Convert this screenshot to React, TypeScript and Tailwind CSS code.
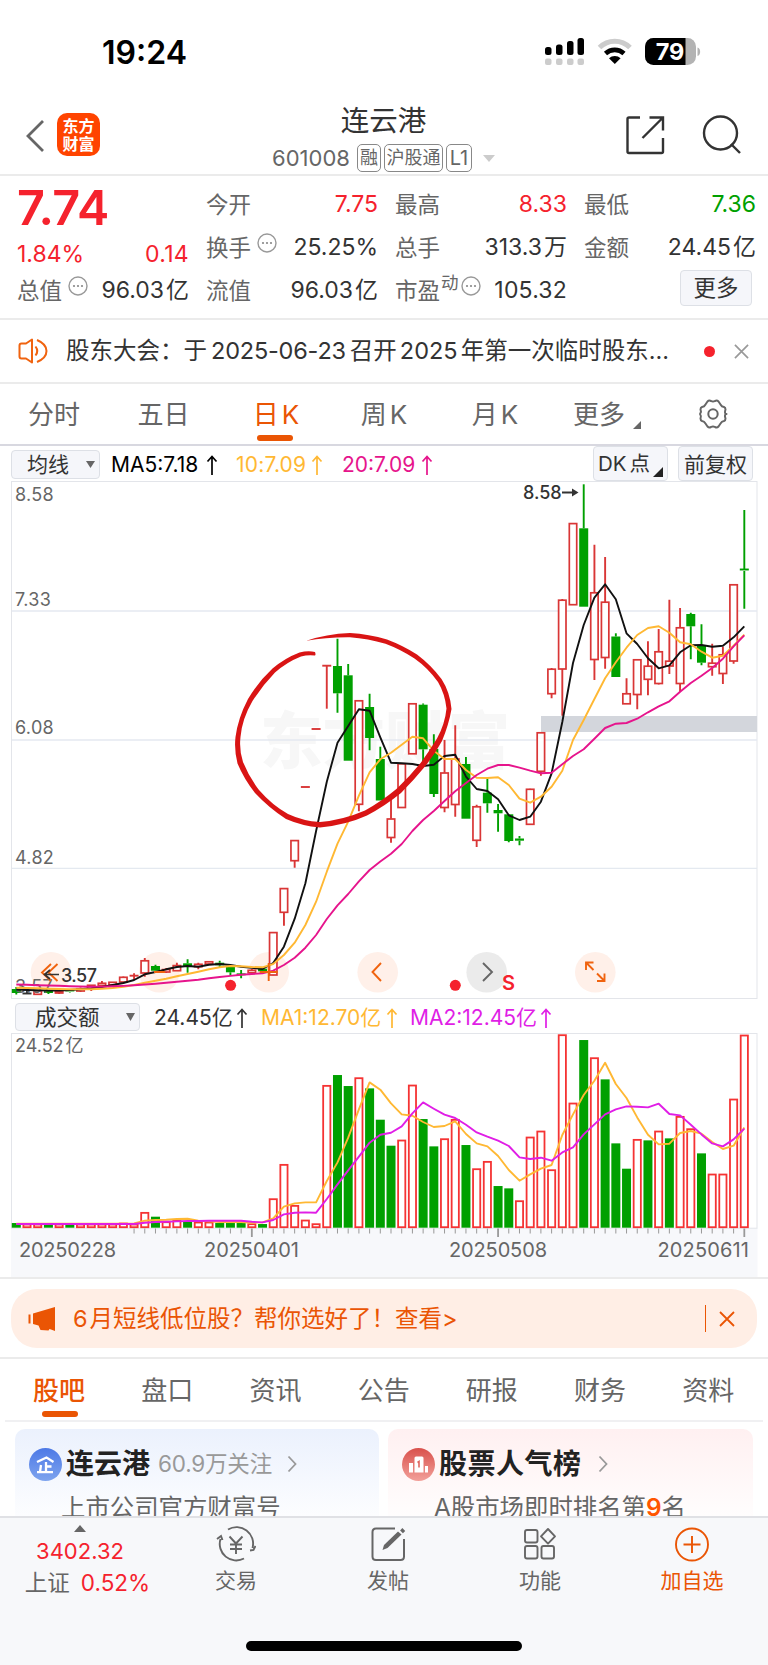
import React from 'react';

// [open side, top of body, bottom of body, wick top, wick bottom], y in chart units
type Candle = ['r' | 'g' | 'k', number, number, number, number];

const candles: Candle[] = [
  ['g', 989, 993, 987, 994.5],
  ['k', 993.5, 993.5, 989.5, 993.5],
  ['r', 990.5, 994.3, 990, 994.5],
  ['g', 991, 993, 990, 994],
  ['r', 991, 993, 990, 994],
  ['g', 990.5, 992, 990, 992.5],
  ['r', 988.5, 991, 987.5, 992],
  ['r', 985, 989, 985, 991],
  ['r', 983, 985.5, 981, 986.5],
  ['r', 982, 985, 982, 985],
  ['r', 977, 982, 976.5, 982.5],
  ['r', 975.7, 975.7, 973.3, 979],
  ['r', 960.5, 973, 958, 976.7],
  ['g', 966, 970.7, 964.7, 972],
  ['r', 969.3, 972, 968, 973],
  ['r', 965.3, 970.7, 962.7, 971],
  ['g', 963.3, 966, 959.3, 972.7],
  ['r', 964, 966.7, 962.7, 969.3],
  ['r', 961.5, 964, 961, 964.5],
  ['g', 962.7, 965.3, 960.7, 967.3],
  ['g', 967, 972.3, 967, 976],
  ['g', 974.3, 974.3, 970, 978.3],
  ['r', 970, 972.7, 969, 973],
  ['g', 968.7, 971.3, 968, 972],
  ['r', 932.3, 975, 932, 975.3],
  ['r', 888.3, 912.3, 888, 925.7],
  ['r', 840.3, 860.7, 840, 867.7],
  ['r', 787, 787, 787, 787],
  ['r', 729, 729, 729, 729],
  ['r', 665.7, 665.7, 665.7, 708.7],
  ['g', 666, 693.3, 638.7, 712.7],
  ['g', 675.3, 760.7, 664, 760.7],
  ['r', 700.5, 804.3, 700, 811.3],
  ['g', 707, 738, 693.7, 750.3],
  ['g', 759, 800.5, 746.7, 800.5],
  ['r', 818.7, 837.5, 796.7, 842.7],
  ['r', 763.5, 807.5, 763, 808],
  ['r', 703.5, 753.8, 703, 754],
  ['g', 704.7, 749.3, 703.5, 765],
  ['g', 749, 794, 734.3, 797],
  ['r', 772.7, 807.5, 740, 812.3],
  ['r', 758.7, 804.5, 725.3, 816.7],
  ['g', 764, 818.7, 757, 818.7],
  ['r', 806.5, 840.3, 804.7, 847],
  ['g', 792.7, 803.3, 778.7, 812.7],
  ['g', 810, 813.3, 804, 831.7],
  ['g', 814.3, 841, 814, 842.3],
  ['g', 838.5, 840.7, 836, 845.3],
  ['r', 789, 824.3, 788.7, 824.5],
  ['r', 732.5, 771.3, 732, 775.7],
  ['r', 668.9, 693.7, 668, 698.3],
  ['r', 599.9, 669, 599, 715.7],
  ['r', 523.3, 604.7, 523, 605],
  ['g', 528.3, 606.7, 484.3, 606.7],
  ['r', 592.5, 659.5, 544.7, 680],
  ['r', 601.9, 657.5, 557, 668.7],
  ['g', 636.5, 677, 633.3, 677],
  ['r', 693.5, 703.8, 678.3, 704],
  ['r', 659.5, 694.5, 659, 709.3],
  ['r', 665.9, 679.3, 641.3, 695.3],
  ['r', 651.5, 683.5, 629, 684.5],
  ['r', 660.9, 666, 599.7, 674],
  ['r', 627.5, 683.5, 608, 691.7],
  ['g', 614, 626.3, 612.7, 659.3],
  ['g', 645.7, 662.7, 624.3, 665.3],
  ['r', 662.9, 666.7, 643.7, 675.7],
  ['r', 654.5, 673.5, 646.7, 684],
  ['r', 584.5, 661, 584, 663.7],
  ['g', 569.5, 571, 510, 608.7],
];

const ma5 = [
  989.5, 990, 990.3, 990.5, 990.5, 990, 989.3, 988.3, 987, 985, 983, 980, 974.3, 972, 969.3, 967, 966, 966.7, 964.7, 964,
  965, 966.7, 967.7, 969, 963, 946.7, 918.7, 883.3, 831, 781.7, 742.7, 726, 709.3, 710.7, 737.3, 762.7, 763.3, 764,
  766, 764.7, 756, 754.7, 776.7, 789, 791, 799.3, 815.3, 820, 816.7, 801.7, 773.3, 722, 663, 625, 597.7, 584.3,
  599.3, 633.3, 644, 658.3, 668.3, 665.3, 652.3, 645.3, 645, 646.7, 645.7, 637.3, 626.3,
];

const ma10 = [
  987.7, 988, 988.3, 988.7, 989, 989.3, 989.3, 989.3, 988.7, 988, 986.7, 985, 982.7, 980.7, 978.7, 976.3, 974, 971.7, 969.3,
  967.3, 966, 966.3, 967, 967.3, 964, 955, 942.7, 925, 901.7, 871.7, 843.7, 821.7, 795.7, 772.3, 759.3, 752.7, 744.7,
  736.7, 738.3, 750.7, 759, 759, 770, 777.7, 778, 777.3, 785, 798.7, 802.7, 796.7, 786.7, 770.7, 740, 720, 699,
  678.3, 662.3, 647.7, 635, 628, 626.3, 632.7, 642.3, 644.3, 651.7, 657.7, 655.7, 645.7, 634.7,
];

const ma20 = [
  984.5, 984.8, 985.2, 985.5, 985.8, 986.2, 986.5, 986.7, 986.6, 986.3, 985.9, 985.3, 984.5, 983.7, 982.7, 981.7, 980.7, 979.7,
  978.3, 977, 975.9, 974.7, 974, 973.3, 970.7, 965, 957.7, 947.7, 935, 919, 905.3, 894, 881.3, 870, 861.5, 853.7,
  844, 831, 820, 811, 801, 791.3, 783, 775, 768.7, 765, 765, 767.7, 770.7, 773.3, 772.7, 764.3, 756, 749.3, 738.8,
  728, 723.7, 723, 718.7, 712.3, 706.3, 701.3, 691.7, 683, 675.7, 668, 658.7, 646.3, 635.3,
];

const volumes = [
  14, 11, 11, 11, 11, 11, 11, 11, 11, 11, 14, 11, 46, 33, 18, 22, 18, 17, 17, 14, 14, 14, 12, 11, 87, 190, 67, 23, 12,
  427, 458, 425, 450, 418, 324, 246, 263, 428, 326, 244, 267, 325, 248, 177, 199, 125, 118, 81, 272, 290, 174, 579,
  374, 563, 510, 445, 253, 177, 265, 262, 290, 268, 334, 297, 223, 161, 161, 386, 578,
];

const greenVolumes = [0, 3, 5, 13, 16, 19, 20, 21, 23, 30, 31, 33, 34, 35, 38, 39, 42, 45, 46, 53, 55, 56, 57, 59, 61, 64];

const volMa1 = [
  12, 12, 12, 12, 12, 12, 12, 12, 12, 12, 12, 13, 21, 23, 24, 26, 27, 21, 19, 17, 17, 17, 15, 16, 28, 63, 73, 76, 76,
  140, 196, 270, 355, 436, 414, 373, 340, 336, 317, 302, 305, 319, 281, 253, 244, 215, 173, 141, 160, 177, 188, 278,
  340, 398, 441, 495, 431, 389, 331, 279, 250, 252, 284, 290, 282, 257, 236, 246, 301,
];

const volMa2 = [
  11, 11, 11, 11, 11, 11, 11, 11, 11, 11, 11, 11, 15, 17, 18, 19, 20, 20, 21, 21, 21, 21, 18, 16, 23, 40, 45, 46, 45,
  86, 130, 172, 213, 255, 279, 285, 304, 343, 376, 357, 339, 329, 309, 286, 273, 261, 245, 211, 206, 210, 201, 226,
  241, 280, 310, 340, 355, 364, 363, 361, 372, 341, 337, 309, 280, 253, 244, 265, 297,
];

const colX = (i: number) => 16.3 + i * 10.706;
const line = (values: number[]) => values.map((v, i) => `${colX(i).toFixed(1)},${v}`).join(' ');
const volLine = (values: number[]) => values.map((v, i) => `${colX(i).toFixed(1)},${(1227.7 - v / 3).toFixed(1)}`).join(' ');

const candleColor = { r: '#d93636', g: '#00a000', k: '#333333' };

const periodTabs = [
  { label: '分时', width: 'w-[102px]' },
  { label: '五日', width: 'w-[117px]' },
  { label: '日', k: true, width: 'w-[108px]', active: true },
  { label: '周', k: true, width: 'w-[108px]' },
  { label: '月', k: true, width: 'w-[114px]' },
];

const infoTabs = ['股吧', '盘口', '资讯', '公告', '研报', '财务', '资料'];

function Dots() {
  return (
    <svg viewBox="0 0 20 20" className="w-5 h-5 shrink-0 -mt-[10px]">
      <circle cx="10" cy="10" r="9" fill="none" stroke="#999" strokeWidth="1.4" />
      <circle cx="6" cy="10" r="1.1" fill="#888" />
      <circle cx="10" cy="10" r="1.1" fill="#888" />
      <circle cx="14" cy="10" r="1.1" fill="#888" />
    </svg>
  );
}

function Yi({ value, unit = '亿' }: { value: string; unit?: string }) {
  return (
    <span className="flex items-center">
      {value}
      <span className="ml-[2px]">{unit}</span>
    </span>
  );
}

function Field({ label, icon, children, color = 'text-[#333]' }: {
  label: React.ReactNode;
  icon?: boolean;
  children?: React.ReactNode;
  color?: string;
}) {
  return (
    <div className="flex items-center h-[43px] text-[23px]">
      <span className="text-[22.5px] text-[#666]">{label}</span>
      {icon && <span className="ml-[6px] flex"><Dots /></span>}
      <span className={`ml-auto ${color}`}>{children}</span>
    </div>
  );
}

function UpArrow() {
  return (
    <svg viewBox="0 0 12 20" className="w-3 h-5" fill="none" stroke="currentColor" strokeWidth="1.7">
      <path d="M6 20V1.5M1.5 6.5L6 1.5l4.5 5" />
    </svg>
  );
}

function Cross({ className }: { className: string }) {
  return (
    <svg viewBox="0 0 16 16" className={className} fill="none" stroke="currentColor" strokeWidth="1.8">
      <path d="M1 1l14 14M15 1L1 15" />
    </svg>
  );
}

function StatusBar() {
  return (
    <div className="h-[88px] flex items-start">
      <div className="ml-[102px] mt-[33px] text-[32px] leading-[40px] font-semibold text-black">19:24</div>
      <svg viewBox="540 34 165 36" className="w-[165px] h-9 ml-auto mr-[63px] mt-[34px]">
        <rect x="545" y="47" width="6.5" height="8" rx="2.5" />
        <rect x="556" y="44.5" width="6.5" height="10.5" rx="2.5" />
        <rect x="567" y="41" width="6.5" height="14" rx="2.5" />
        <rect x="577.5" y="38" width="6.5" height="17" rx="2.5" />
        {[545, 556, 567, 577.5].map((x) => (
          <rect key={x} x={x} y="58.5" width="6.5" height="6.5" rx="2" fill="#ccc" />
        ))}
        <path d="M599.5 47.5A21.5 21.5 0 0 1 630 47.5" fill="none" stroke="#ccc" strokeWidth="5" />
        <path d="M605.5 53.5A13.5 13.5 0 0 1 624 53.5" fill="none" stroke="#000" strokeWidth="4.6" />
        <path d="M614.8 64l-5.8-5.8a8.4 8.4 0 0 1 11.6 0z" />
        <clipPath id="battery"><rect x="645" y="38" width="51" height="27" rx="8.5" /></clipPath>
        <g clipPath="url(#battery)">
          <rect x="645" y="38" width="51" height="27" fill="#b3b3b3" />
          <rect x="645" y="38" width="40.5" height="27" />
        </g>
        <path d="M697.5 47.5c3.5 1 3.5 7.5 0 8.5z" fill="#b3b3b3" />
        <text x="670" y="60" textAnchor="middle" fontSize="23.5" fontWeight="700" fill="#fff">79</text>
      </svg>
    </div>
  );
}

function Header() {
  return (
    <div className="h-[88px] flex border-b-2 border-[#ebebeb]">
      <div className="flex-1 flex pl-[25px] pt-[25px]">
        <svg viewBox="0 0 20 34" className="w-5 h-[34px] mt-[6px]" fill="none" stroke="#666" strokeWidth="2.8">
          <path d="M18 2L3 17l15 15" />
        </svg>
        <div className="ml-[12px] w-[43px] h-[43px] rounded-[10px] bg-[#ff4400] text-white text-[16px] leading-[18px] font-bold text-center pt-[4px]">
          东方
          <br />
          财富
        </div>
      </div>
      <div className="flex flex-col items-center w-[230px] pt-[13px]">
        <div className="text-[28.5px] leading-[40px] text-[#333]">连云港</div>
        <div className="flex items-center h-[28px] mt-[3px] text-[#666] text-[22px]">
          <span className="mr-[7px]">601008</span>
          <span className="h-[28px] w-[24px] border-[1.5px] border-[#888] rounded-[5px] text-[18px] leading-[25px] flex justify-center">融</span>
          <span className="h-[28px] w-[59px] ml-[3px] border-[1.5px] border-[#888] rounded-[5px] text-[18px] leading-[25px] flex justify-center">沪股通</span>
          <span className="h-[28px] w-[26px] ml-[3px] border-[1.5px] border-[#888] rounded-[5px] text-[20px] leading-[26px] flex justify-center">L1</span>
          <svg viewBox="0 0 12 7" className="w-3 h-[7px] ml-[11px]"><path d="M0 0h12L6 7z" fill="#ccc" /></svg>
        </div>
      </div>
      <div className="flex-1 flex justify-end pr-[26px] pt-[27px]">
        <svg viewBox="627 115 40 40" className="w-10 h-10" fill="none" stroke="#333" strokeWidth="2.4">
          <path d="M641 117.5H630q-1.5 0-1.5 1.5v32.5q0 1.500 1.500 1.500H662.500q1.500 0 1.500-1.500V138M650.500 117.500H664V130.500M664 117.500L643.500 138" />
        </svg>
        <svg viewBox="702 115 40 40" className="w-10 h-10 ml-[36px]" fill="none" stroke="#333" strokeWidth="2.4">
          <circle cx="720.500" cy="133" r="16.500" />
          <path d="M731 144l9 9" />
        </svg>
      </div>
    </div>
  );
}

function Quote() {
  return (
    <div className="h-[144px] flex gap-[17px] pl-[17px] pr-[12px] pt-[7px] border-b-2 border-[#ebebeb]">
      <div className="w-[172px]">
        <div className="h-[50px] leading-[50px] text-[48.500px] font-semibold text-[#f5222d] tracking-[-0.500px]">7.74</div>
        <div className="h-[36px] pt-[7px] flex items-center justify-between text-[23px] text-[#f5222d]">
          <span>1.84%</span>
          <span className="tracking-[0.300px]">0.14</span>
        </div>
        <Field label="总值" icon><Yi value="96.03" /></Field>
      </div>
      <div className="w-[172px]">
        <Field label="今开" color="text-[#f5222d]">7.75</Field>
        <Field label="换手" icon>25.25%</Field>
        <Field label="流值"><Yi value="96.03" /></Field>
      </div>
      <div className="w-[172px]">
        <Field label="最高" color="text-[#f5222d]">8.33</Field>
        <Field label="总手"><Yi value="313.3" unit="万" /></Field>
        <div className="flex items-center h-[43px] text-[23px]">
          <span className="text-[22.5px] text-[#666]">市盈</span>
          <span className="text-[17.5px] text-[#666] -mt-[14px] ml-[1px]">动</span>
          <span className="ml-[2px] flex"><Dots /></span>
          <span className="ml-auto text-[#333] tracking-[0.200px]">105.32</span>
        </div>
      </div>
      <div className="w-[172px]">
        <Field label="最低" color="text-[#00a000]">7.36</Field>
        <Field label="金额"><Yi value="24.45" /></Field>
        <div className="ml-auto mr-[4px] mt-[1px] w-[72px] h-[36px] rounded-[4px] border border-[#dde0e6] bg-[#f5f6fa] text-[22.5px] leading-[33px] text-center text-[#333]">
          更多
        </div>
      </div>
    </div>
  );
}

function Notice() {
  return (
    <div className="h-[64px] flex items-center pl-[18px] border-b-2 border-[#ebebeb]">
      <svg viewBox="0 0 30 26" className="w-[30px] h-[26px]" fill="none" stroke="#f0630f" strokeWidth="2" strokeLinejoin="round">
        <path d="M14 1.5v23L8 20.5H3.5Q1.5 20.5 1.5 18.5V7.5Q1.5 5.5 3.5 5.5H8z" />
        <path d="M17.5 8.5q3.5 4.5 0 9M19 2q9.5 4 9.5 11T19 24" />
      </svg>
      <div className="ml-[18px] flex items-center text-[23.5px] text-[#333] whitespace-nowrap">
        <span>股东大会：于</span>
        <span className="mx-[4px] tracking-[-0.200px]">2025-06-23</span>
        <span>召开</span>
        <span className="mx-[3px]">2025</span>
        <span>年第一次临时股东...</span>
      </div>
      <span className="ml-auto w-[11px] h-[11px] rounded-full bg-[#f5222d]" />
      <Cross className="w-[15px] h-[15px] ml-[19px] mr-[19px] text-[#999]" />
    </div>
  );
}

function PeriodTabs() {
  return (
    <div className="h-[62px] flex pl-[3px] border-b-2 border-[#d8d8e0] text-[26px] text-[#666]">
      {periodTabs.map((tab) => (
        <div key={tab.label} className={`${tab.width} flex flex-col items-center pt-[11px] ${tab.active ? 'text-[#ea5504]' : ''}`}>
          <span className="leading-[40px] flex">
            {tab.label}
            {tab.k && <span className="ml-[3px]">K</span>}
          </span>
          {tab.active && <span className="w-[36px] h-[6px] rounded-[3px] mr-[2px] bg-[#ea5504]" />}
        </div>
      ))}
      <div className="ml-[21px] pt-[11px] leading-[40px] flex">
        更多
        <svg viewBox="0 0 8 8" className="w-2 h-2 ml-[8px] mt-[26px]"><path d="M8 0v8H0z" fill="#666" /></svg>
      </div>
      <svg viewBox="0 0 32 32" className="w-8 h-8 ml-auto mr-[39px] mt-[14px]" fill="none" stroke="#666" strokeWidth="2" strokeLinejoin="round">
        <path d="M10.500 3.500Q12 2 14 3q2 1.200 4 0 2-1 3.500.5l2.200 3.200q1 2 3.300 2.300 1.500.5 1.500 2.500-1.500 4.500 1 4.500-2.500 0-1 4.500 0 2-1.500 2.500-2.300.3-3.300 2.300l-2.200 3.200Q20 30 18 29q-2-1.200-4 0-2 1-3.500-.5l-2.200-3.200q-1-2-3.300-2.300-1.500-.5-1.500-2.500 1.200-2.300-.5-4.500 1.700-2.200.5-4.500 0-2 1.500-2.500 2.300-.3 3.300-2.300z" />
        <circle cx="16" cy="16" r="4.700" />
      </svg>
    </div>
  );
}

function MaToolbar() {
  return (
    <div className="h-[35px] flex items-center pl-[11px] pr-[15px] text-[21px]">
      <div className="w-[89px] h-[29px] flex items-center border border-[#dde0e6] rounded-[4px] bg-[#f5f6fa] pl-[15px] mt-[1px] text-[21px] leading-[27px] text-[#333]">
        均线
        <svg viewBox="0 0 9 7" className="w-[9px] h-[7px] ml-[17px]"><path d="M0 0h9L4.500 7z" fill="#666" /></svg>
      </div>
      <div className="flex items-center ml-[11px] mt-[2px] text-black"><span className="w-[95px]">MA5:7.18</span><UpArrow /></div>
      <div className="flex items-center ml-[18px] mt-[2px] text-[#ffb833]"><span className="w-[75px] tracking-[0.200px]">10:7.09</span><UpArrow /></div>
      <div className="flex items-center ml-[19px] mt-[2px] text-[#e6148c]"><span className="w-[79px]">20:7.09</span><UpArrow /></div>
      <div className="ml-auto w-[75px] h-[35px] flex items-center border border-[#dde0e6] rounded-[4px] bg-[#f5f6fa] pl-[4px] pt-[2px] text-[20.500px] text-[#333] relative">
        DK<span className="ml-[3px]">点</span>
        <svg viewBox="0 0 10 10" className="absolute right-[4px] bottom-[3px] w-[10px] h-[10px]"><path d="M10 0v10H0z" fill="#222" /></svg>
      </div>
      <div className="ml-[10px] w-[75px] h-[35px] flex items-center justify-center border border-[#dde0e6] rounded-[4px] bg-[#f5f6fa] pt-[2px] text-[21px] text-[#333]">
        前复权
      </div>
    </div>
  );
}

function PriceChart() {
  return (
    <svg viewBox="0 481 768 518" className="w-full h-[518px] block">
      <text x="260" y="764" fontSize="62.500" fontWeight="900" fill="#f7f7f7">东方财富</text>
      <rect x="11.500" y="481.500" width="745.500" height="517" fill="none" stroke="#e3e5ea" />
      {[611, 740, 868.300].map((y) => (
        <path key={y} d={`M12 ${y}H757`} stroke="#e4e9f0" strokeWidth="1.300" />
      ))}
      <rect x="541" y="716" width="216" height="16" fill="#d3d6dc" />

      {/* Round chart controls */}
      {[51, 159.300, 268.700, 377.700, 595.300].map((x) => (
        <circle key={x} cx={x} cy="972.300" r="20.300" fill="#fff0e9" />
      ))}
      <circle cx="486.700" cy="972.300" r="20.300" fill="#ebebeb" />

      {candles.map(([side, top, bottom, high, low], i) => {
        const x = colX(i);
        const color = candleColor[side];
        const flat = bottom - top < 2;
        return (
          <g key={i} stroke={color} strokeWidth="1.900">
            <path d={`M${x} ${high}V${top}M${x} ${bottom}V${low}`} />
            {flat && <path d={`M${x - 4.500} ${top}H${x + 4.500}`} />}
            {!flat && side === 'g' && <rect x={x - 4.500} y={top} width="9" height={bottom - top} fill={color} stroke="none" />}
            {!flat && side === 'r' && <rect x={x - 3.700} y={top + 0.300} width="7.400" height={bottom - top - 0.300} fill="#fff" strokeWidth="1.700" />}
          </g>
        );
      })}
      <g fontSize="18" fill="#666" letterSpacing="0.300">
        <text x="15" y="501">8.58</text>
        <text x="15" y="605.500">7.33</text>
        <text x="15" y="734">6.08</text>
        <text x="15" y="863.500">4.82</text>
        <text x="15" y="992.500">3.57</text>
      </g>
      <g fill="none" strokeWidth="1.900" strokeLinejoin="round">
        <polyline points={line(ma5)} stroke="#111" />
        <polyline points={line(ma10)} stroke="#ffb833" />
        <polyline points={line(ma20)} stroke="#e6148c" />
      </g>

      <g fill="none" stroke="#f0630f" strokeWidth="1.900">
        <path d="M51 964l-9 8.500 9 8.500M57.500 964l-9 8.500 9 8.500" />
        <path d="M154 972H165M259.700 972h18M268.700 963v18" />
        <path d="M381 963l-8.500 9 8.500 9" />
        <path d="M586 970v-7.500h7.500M586 962.500l7.500 7.500M604.500 973.500v7.500H597M604.500 981l-7.500-7.500" />
      </g>
      <path d="M483 963l9 9-9 9" fill="none" stroke="#666" strokeWidth="1.900" />

      <g fontSize="18" fontWeight="500" fill="#333">
        <text x="523" y="499">8.58</text>
        <text x="61" y="981.500" textLength="36">3.57</text>
      </g>
      <path d="M562 492.500h11" stroke="#333" strokeWidth="2" />
      <path d="M572 488.500l6.500 4-6.500 4z" fill="#333" />
      <path d="M59 974.500H45M50 970l-5.500 4.500 5.500 4.500" fill="none" stroke="#333" strokeWidth="1.700" />

      <circle cx="230.600" cy="985.300" r="5.500" fill="#f5222d" />
      <circle cx="455.300" cy="985.300" r="5.500" fill="#f5222d" />
      <text x="502" y="990" fontSize="20" fontWeight="600" fill="#f5222d">S</text>

      {/* Hand-drawn marker loop */}
      <path
        d="M306.500 640.700Q326 634 350 633Q369 634 387 639.500Q403 645.500 417 654.500Q431 665 441.500 679Q450 692 451.500 709Q449 724 442 741Q435 754 425 766.500Q413 781 401 793Q385 806 367 815.500Q346 825 320 827.500Q302 826 286 819Q269 808 255 793Q244 779 237.500 763.500Q234 750 235.500 737Q238 718 248 699Q258 682 272.500 668.500Q285 658 299.500 652.500Q308 650.500 315 652Q316 654.500 315 655.500Q308 654.500 301 656.500Q287 662 275 672.500Q262 686 252.500 701Q242 719 240.500 737Q239 750 243 762Q249 777 259 790Q272 805 288 814Q303 821 320 822Q343 820 365 810.500Q382 801 397 788.500Q410 776 421 762.500Q430 750 437 738.500Q445 724 446.500 708.500Q445 694 438 682Q428 668 414.500 658.500Q401 649.500 385.500 643.700Q368 638.500 350 637.200Q326 637 306.500 640.700Z"
        fill="#d91414"
      />
    </svg>
  );
}

function VolumeToolbar() {
  return (
    <div className="h-[34px] flex items-center pl-[15px] pt-px text-[21px]">
      <div className="w-[125px] h-[28px] flex items-center border border-[#dde0e6] rounded-[4px] bg-[#f5f6fa] pl-[19px] text-[21.500px] leading-[26px] text-[#333]">
        成交额
        <svg viewBox="0 0 9 8" className="w-[9px] h-[8px] ml-[26px]"><path d="M0 0h9L4.500 8z" fill="#666" /></svg>
      </div>
      <div className="flex items-center ml-[14px] mt-[2px] text-[#333]"><span className="w-[82px]">24.45亿</span><UpArrow /></div>
      <div className="flex items-center ml-[13px] mt-[2px] text-[#ffb833]"><span className="w-[125px]">MA1:12.70亿</span><UpArrow /></div>
      <div className="flex items-center ml-[12px] mt-[2px] text-[#e01ee6]"><span className="w-[130px]">MA2:12.45亿</span><UpArrow /></div>
    </div>
  );
}

function VolumeChart() {
  return (
    <svg viewBox="0 1033 768 244" className="w-full h-[244px] block">
      <rect x="11" y="1228" width="746.500" height="49" fill="#f7f8fb" />
      <rect x="11.500" y="1033.500" width="745.500" height="194.700" fill="none" stroke="#e3e5ea" />
      <text x="15" y="1052" fontSize="18" fill="#666">24.52</text>
      <text x="65.500" y="1052" fontSize="18" fill="#666">亿</text>
      {volumes.map((v, i) => {
        const x = colX(i);
        const h = v / 3;
        return greenVolumes.includes(i) ? (
          <rect key={i} x={x - 4.500} y={1227.700 - h} width="9" height={h} fill="#00a000" />
        ) : (
          <rect key={i} x={x - 3.600} y={1228.200 - h} width="7.200" height={h - 1} fill="#fff" stroke="#f53333" strokeWidth="1.800" />
        );
      })}
      {volumes.map((_, i) => i > 10 && (
        <path key={i} d={`M${colX(i)} 1228.500v${i === 22 || i === 45 || i === 68 ? 8.500 : 5}`} stroke="#999" strokeWidth={i === 22 || i === 45 || i === 68 ? 1.800 : 1} />
      ))}
      <g fill="none" strokeWidth="1.900" strokeLinejoin="round">
        <polyline points={volLine(volMa1)} stroke="#ffb833" />
        <polyline points={volLine(volMa2)} stroke="#e01ee6" />
      </g>
      <g fontSize="20" fill="#666">
        <text x="19" y="1256.500" textLength="97">20250228</text>
        <text x="204" y="1256.500" textLength="95">20250401</text>
        <text x="449" y="1256.500" textLength="98">20250508</text>
        <text x="657.500" y="1256.500" textLength="91.500">20250611</text>
      </g>
    </svg>
  );
}

function Banner() {
  return (
    <div className="h-[82px] border-y-2 border-[#ebebeb] pt-[10px] px-[11px]">
      <div className="h-[59px] rounded-[26px] bg-[#ffeee5] flex items-center text-[#ea5504] pl-[17px]">
        <svg viewBox="0 0 28 24" className="w-7 h-6" fill="#ea5504">
          <path d="M0.500 7.500h2v9h-2zM5 6.500L27 0v24l-4-1.500-1.500-.5-1 1.500-8-.5-2-4.500L5 17z" />
        </svg>
        <div className="ml-[17px] flex text-[23.500px]">
          <span>6</span>
          <span className="ml-[2px]">月短线低位股？帮你选好了！查看&gt;</span>
        </div>
        <span className="ml-auto w-[1.500px] h-[27px] bg-[#ea5504]" />
        <Cross className="w-4 h-4 ml-[13px] mr-[22px]" />
      </div>
    </div>
  );
}

function InfoTabs() {
  return (
    <div className="mx-[5px] h-[63px] flex border-b-2 border-[#f0f0f2] text-[26px] text-[#666]">
      {infoTabs.map((tab, i) => (
        <div key={tab} className={`w-[108.200px] shrink-0 flex flex-col items-center pt-[12px] ${i === 0 ? 'text-[#ea5504] font-medium' : ''}`}>
          <span className="leading-[40px]">{tab}</span>
          {i === 0 && <span className="w-[36px] h-[6px] rounded-[3px] ml-[2px] bg-[#ea5504]" />}
        </div>
      ))}
    </div>
  );
}

function Chevron({ className }: { className: string }) {
  return (
    <svg viewBox="0 0 10 18" className={`w-[10px] h-[18px] ${className}`} fill="none" stroke="#999" strokeWidth="1.800">
      <path d="M1.500 1.500L8.500 9l-7 7.500" />
    </svg>
  );
}

function Cards() {
  return (
    <div className="h-[94px] flex gap-[9px] pl-[15px] pt-[7px] overflow-hidden">
      <div className="w-[364px] h-[100px] rounded-t-[10px] bg-gradient-to-b from-[#ebf1fd] to-white pl-[14px] pt-[15px]">
        <div className="flex items-center h-[40px]">
          <svg viewBox="0 0 33 33" className="w-[33px] h-[33px]">
            <linearGradient id="corp" x1="0" y1="0" x2="0" y2="1">
              <stop stopColor="#4d79e6" />
              <stop offset="1" stopColor="#7ea4ee" />
            </linearGradient>
            <circle cx="16.500" cy="16.500" r="16.500" fill="url(#corp)" />
            <path d="M8 14L17.500 9.500l7 4.500M17 14v10M17 18.500h5.500M12 17l-1 7M8 24.200h16" fill="none" stroke="#fff" strokeWidth="2.300" />
          </svg>
          <span className="ml-[4px] text-[28px] font-bold text-[#222]">连云港</span>
          <span className="ml-[8px] text-[22.500px] tracking-[-0.200px] text-[#999]">60.9万关注</span>
          <Chevron className="ml-[15px]" />
        </div>
        <div className="ml-[32px] mt-[3px] leading-[40px] text-[24.400px] text-[#666]">上市公司官方财富号</div>
      </div>
      <div className="w-[365px] h-[100px] rounded-t-[10px] bg-gradient-to-b from-[#fff0f1] to-white pl-[14px] pt-[15px]">
        <div className="flex items-center h-[40px]">
          <svg viewBox="0 0 33 33" className="w-[33px] h-[33px]">
            <linearGradient id="rank" x1="0" y1="0" x2="0" y2="1">
              <stop stopColor="#d9514c" />
              <stop offset="1" stopColor="#f2a09a" />
            </linearGradient>
            <circle cx="16.500" cy="16.500" r="16.500" fill="url(#rank)" />
            <path d="M7 15h4v9.500H7zM12.500 10q0-1.500 1.500-1.500h6q1.500 0 1.500 1.500v14.500h-9zM23 18h3v6.500h-3z" fill="#fff" />
            <path d="M15.500 14.500l1.500-1v6" fill="none" stroke="#e0665f" strokeWidth="1.600" />
          </svg>
          <span className="ml-[4px] text-[28px] tracking-[0.500px] font-bold text-[#222]">股票人气榜</span>
          <Chevron className="ml-[16px]" />
        </div>
        <div className="ml-[32px] mt-[3px] leading-[40px] text-[24.400px] text-[#666]">
          A股市场即时排名第<span className="font-semibold text-[#ff5500]">9</span>名
        </div>
      </div>
    </div>
  );
}

function BottomBar() {
  return (
    <div className="relative h-[149px] border-t-2 border-[#e0e1e5] bg-[#f7f8fa] text-[#666]">
      <div className="flex">
        <div className="w-[160px] flex flex-col items-center pt-[7px]">
          <svg viewBox="0 0 12 7" className="w-3 h-[7px]"><path d="M6 0l6 7H0z" fill="#666" /></svg>
          <span className="text-[22px] leading-[30px] mt-[4px] text-[#f5222d]">3402.32</span>
          <div className="flex text-[22.500px] leading-[30px] mt-[2px] ml-[15px]">
            上证<span className="ml-[11px] text-[#f5222d]">0.52%</span>
          </div>
        </div>
        <div className="w-[152px] flex flex-col items-center pt-[8px]">
          <svg viewBox="0 0 40 36" className="w-10 h-9" fill="none" stroke="#666" strokeWidth="1.900">
            <path d="M12 3.500A16.500 16.500 0 0 1 36.500 22M28 32.500A16.500 16.500 0 0 1 4.500 13M34 24.500l3.500-.5 2-4M1 13l4-3 1.500 4M13.500 10.500l6.500 7 6.500-7M20 17.500V28M14 18.500h12M14 23h12" />
          </svg>
          <span className="text-[21px] leading-[30px] mt-[4px]">交易</span>
        </div>
        <div className="w-[152px] flex flex-col items-center pt-[8px]">
          <svg viewBox="0 0 36 36" className="w-9 h-9" fill="none" stroke="#666" strokeWidth="2">
            <path d="M25 2.500H6Q2.500 2.500 2.500 6V30.500Q2.500 34 6 34H30.500Q34 34 34 30.500V13" />
            <path d="M12.500 24l1.500-5L28 5.500l3.500 3L17.500 22z" fill="#666" stroke="none" />
            <path d="M31.500 5.800l2.300-2.300" strokeWidth="4" />
          </svg>
          <span className="text-[21px] leading-[30px] mt-[4px]">发帖</span>
        </div>
        <div className="w-[152px] flex flex-col items-center pt-[8px]">
          <svg viewBox="0 0 36 36" className="w-9 h-9" fill="none" stroke="#666" strokeWidth="1.900">
            <rect x="3" y="4" width="12.500" height="12.500" rx="2" />
            <rect x="3" y="20" width="12.500" height="12.500" rx="2" />
            <rect x="19.500" y="20" width="12.500" height="12.500" rx="2" />
            <path d="M26 3l7 7.300-7 7.300-7-7.300z" strokeLinejoin="round" />
          </svg>
          <span className="text-[21px] leading-[30px] mt-[4px]">功能</span>
        </div>
        <div className="w-[152px] flex flex-col items-center pt-[8px] text-[#ea5504]">
          <svg viewBox="0 0 36 36" className="w-9 h-9" fill="none" stroke="currentColor" strokeWidth="1.900">
            <circle cx="18" cy="18.500" r="16" />
            <path d="M9.500 18.500h17M18 10v17" />
          </svg>
          <span className="text-[21px] leading-[30px] mt-[4px]">加自选</span>
        </div>
      </div>
      <div className="absolute bottom-[14px] left-[246px] w-[276px] h-[10px] rounded-full bg-black" />
    </div>
  );
}

export default function App() {
  return (
    <div className="w-[768px] h-[1665px] bg-white overflow-hidden font-['Inter','Noto_Sans_CJK_SC',sans-serif]">
      <StatusBar />
      <Header />
      <Quote />
      <Notice />
      <PeriodTabs />
      <MaToolbar />
      <PriceChart />
      <VolumeToolbar />
      <VolumeChart />
      <Banner />
      <InfoTabs />
      <Cards />
      <BottomBar />
    </div>
  );
}
